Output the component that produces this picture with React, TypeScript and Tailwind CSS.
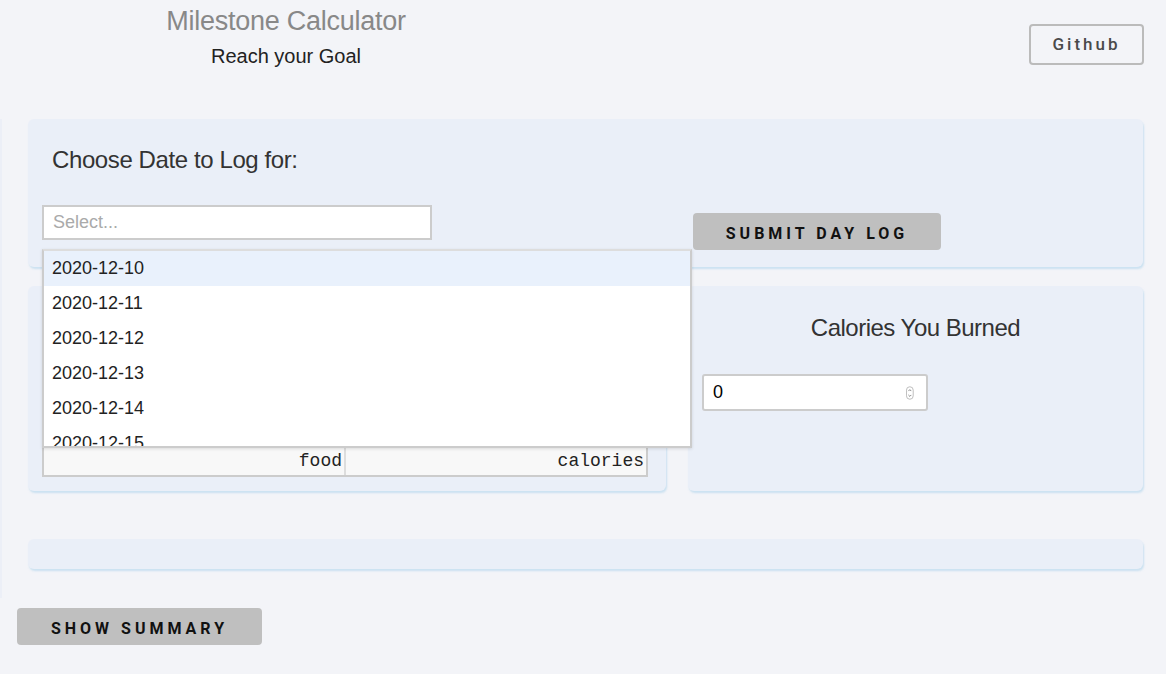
import { useState } from "react";

const DATES = [
  "2020-12-10",
  "2020-12-11",
  "2020-12-12",
  "2020-12-13",
  "2020-12-14",
  "2020-12-15",
  "2020-12-16",
];

const panel =
  "rounded-[6px] bg-[#eaeff8] shadow-[1px_2px_2px_rgba(170,210,235,0.55)]";

function SpinnerIcon() {
  return (
    <svg width="8" height="14" viewBox="0 0 8 14" className="text-[#777]">
      <rect x="0.5" y="0.5" width="7" height="13" rx="3.5" fill="none" stroke="#bbb" />
      <path d="M2.5 5 L4 3.5 L5.5 5" fill="none" stroke="currentColor" strokeWidth="0.9" />
      <path d="M2.5 9 L4 10.5 L5.5 9" fill="none" stroke="currentColor" strokeWidth="0.9" />
    </svg>
  );
}

export default function App() {
  const [burned, setBurned] = useState("0");

  return (
    <div className="min-h-[674px] bg-[#f3f4f8] font-['Liberation_Sans',Arial,sans-serif]">
      <header className="flex items-start justify-between">
        <div className="w-[572px] pt-[5px] text-center">
          <h1 className="text-[27px] leading-[32px] tracking-[-0.25px] text-[#888]">
            Milestone Calculator
          </h1>
          <p className="mt-[7px] text-[20px] leading-[24px] text-[#222]">
            Reach your Goal
          </p>
        </div>
        <a
          href="#"
          className="mr-[22px] mt-[24px] flex h-[41px] w-[115px] items-center justify-center rounded-[4px] border-2 border-[#bbb] font-['Roboto',sans-serif] text-[17px] font-medium tracking-[3px] text-[#4a4a4a]"
        >
          Github
        </a>
      </header>

      <main className="mt-[51px] border-l-2 border-[#eceff7] pb-[29px]">
        <section className={`${panel} relative ml-[26px] mr-[23px] h-[148px] px-[14px] pt-[27px]`}>
          <h2 className="pl-[10px] text-[24px] leading-[28px] tracking-[-0.4px] text-[#333]">
            Choose Date to Log for:
          </h2>
          <div className="mt-[31px] flex items-start">
            <div className="relative">
              <div className="flex h-[35px] w-[390px] items-center border-2 border-[#ccc] bg-white pl-[9px] text-[18px] text-[#aaa]">
                Select...
              </div>
              <ul className="absolute left-0 top-[44px] z-20 h-[199px] w-[650px] overflow-hidden border-2 border-[#ccc] border-t-[#ddd] bg-white text-[18px] text-[#222] shadow-[0_1px_3px_rgba(0,0,0,0.12)]">
                {DATES.map((d, i) => (
                  <li
                    key={d}
                    className={`flex h-[35px] shrink-0 items-center pl-[8px] ${i === 0 ? "bg-[#e9f1fc]" : ""}`}
                  >
                    {d}
                  </li>
                ))}
              </ul>
            </div>
            <button
              type="button"
              className="ml-[261px] mt-[8px] h-[37px] w-[248px] rounded-[4px] bg-[#bfbfbf] pt-[4px] font-['Roboto',sans-serif] text-[16px] font-bold tracking-[4px] text-[#111]"
            >
              SUBMIT DAY LOG
            </button>
          </div>
        </section>

        <div className="ml-[26px] mr-[23px] mt-[19px] flex gap-[22px]">
          <section className={`${panel} flex h-[205px] w-[638px] flex-col justify-end pb-[14px] pl-[14px] pr-[18px]`}>
            <div className="flex h-[32px] border-2 border-[#ccc] bg-[#f8f8f8] font-['Liberation_Mono',monospace] text-[18px] text-[#222]">
              <div className="flex flex-1 items-center justify-end border-r-2 border-[#ddd] pr-[2px]">
                food
              </div>
              <div className="flex flex-1 items-center justify-end pr-[2px]">calories</div>
            </div>
          </section>

          <section className={`${panel} h-[205px] flex-1 px-[14px] pt-[28px]`}>
            <h2 className="text-center text-[24px] leading-[28px] tracking-[-0.5px] text-[#333]">
              Calories You Burned
            </h2>
            <div className="mt-[32px] flex h-[37px] w-[226px] items-center rounded-[3px] border-2 border-[#ccc] bg-white pl-[9px] pr-[12px]">
              <input
                value={burned}
                onChange={(e) => setBurned(e.target.value)}
                className="w-full bg-transparent text-[18px] text-black outline-none"
              />
              <SpinnerIcon />
            </div>
          </section>
        </div>

        <section className={`${panel} ml-[26px] mr-[23px] mt-[48px] h-[30px]`} />
      </main>

      <div className="pl-[17px] pt-[10px]">
        <button
          type="button"
          className="h-[37px] w-[245px] rounded-[4px] bg-[#bfbfbf] pt-[4px] font-['Roboto',sans-serif] text-[16px] font-bold tracking-[4px] text-[#111]"
        >
          SHOW SUMMARY
        </button>
      </div>
    </div>
  );
}
